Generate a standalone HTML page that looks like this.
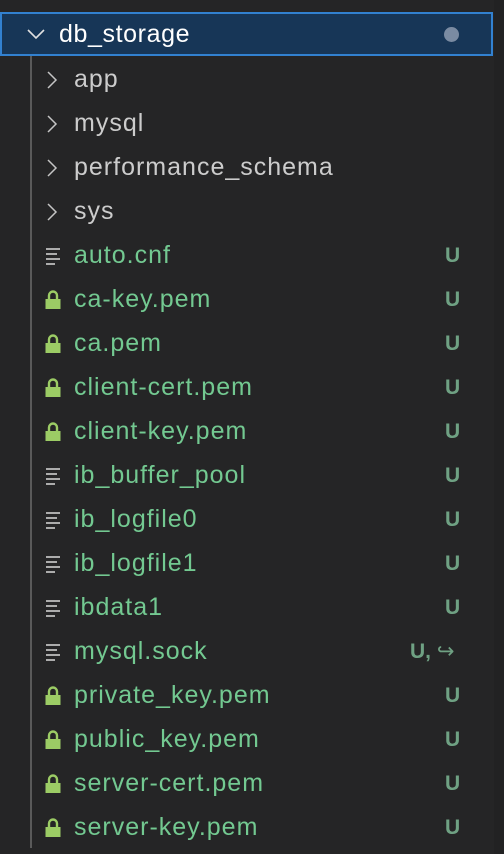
<!DOCTYPE html>
<html><head><meta charset="utf-8"><style>
html,body{margin:0;padding:0;width:504px;height:854px;background:#252526;overflow:hidden;font-family:"Liberation Sans",sans-serif;}
.strip{position:absolute;left:494px;top:0;width:10px;height:854px;background:#222223;}
.sel{position:absolute;left:0;top:12px;width:489px;height:40px;background:#173657;border:2px solid #3281d0;}
.dot{position:absolute;left:444px;top:27px;width:15px;height:15px;border-radius:50%;background:#7a8ba2;}
.guide{position:absolute;left:30px;top:56px;width:2px;height:792px;background:#5a5a5a;}
.row{position:absolute;left:0;height:44px;width:494px;}
.t{position:absolute;left:74px;top:8px;font-size:25px;letter-spacing:1px;line-height:28px;color:#73c991;white-space:nowrap;}
.f .t{color:#cccccc;}
.u{position:absolute;left:445px;top:10px;font-size:21px;font-weight:bold;line-height:26px;color:#6fa183;}
.ic{position:absolute;left:44px;top:12px;}
</style></head><body>
<div class="strip"></div>
<div class="sel"></div>
<svg style="position:absolute;left:26px;top:28px" width="20" height="12"><path d="M2 2 L10 10 L18 2" fill="none" stroke="#e0e0e0" stroke-width="1.6"/></svg>
<div style="position:absolute;left:59px;top:20px;font-size:25px;letter-spacing:0.6px;line-height:28px;color:#ffffff">db_storage</div>
<div class="dot"></div>
<div class="guide"></div>
<div id="rows"></div>
<div class="row f" style="top:57px"><svg class="ic" width="16" height="22"><path d="M4 3 L12 11 L4 19" fill="none" stroke="#c5c5c5" stroke-width="1.5"/></svg><div class="t">app</div></div>
<div class="row f" style="top:101px"><svg class="ic" width="16" height="22"><path d="M4 3 L12 11 L4 19" fill="none" stroke="#c5c5c5" stroke-width="1.5"/></svg><div class="t">mysql</div></div>
<div class="row f" style="top:145px"><svg class="ic" width="16" height="22"><path d="M4 3 L12 11 L4 19" fill="none" stroke="#c5c5c5" stroke-width="1.5"/></svg><div class="t">performance_schema</div></div>
<div class="row f" style="top:189px"><svg class="ic" width="16" height="22"><path d="M4 3 L12 11 L4 19" fill="none" stroke="#c5c5c5" stroke-width="1.5"/></svg><div class="t">sys</div></div>
<script>
var files=[["auto.cnf",0],["ca-key.pem",1],["ca.pem",1],["client-cert.pem",1],["client-key.pem",1],["ib_buffer_pool",0],["ib_logfile0",0],["ib_logfile1",0],["ibdata1",0],["mysql.sock",0],["private_key.pem",1],["public_key.pem",1],["server-cert.pem",1],["server-key.pem",1]];
var h="";
files.forEach(function(f,i){
var top=233+i*44;
var ic=f[1]?'<svg class="ic" width="18" height="22"><path d="M5 10 V6.5 a4 4 0 0 1 8 0 V10" fill="none" stroke="#9ccc65" stroke-width="2.4"/><rect x="1.5" y="10" width="15" height="10" fill="#9ccc65"/></svg>':'<svg class="ic" width="18" height="22"><g stroke="#c5c5c5" stroke-width="1.7"><line x1="2" y1="4" x2="16" y2="4"/><line x1="2" y1="9" x2="13" y2="9"/><line x1="2" y1="14" x2="16" y2="14"/><line x1="2" y1="19" x2="11" y2="19"/></g></svg>';
var u=f[0]=="mysql.sock"?'<div class="u" style="left:410px">U, <span style="font-weight:normal">↪</span></div>':'<div class="u">U</div>';
h+='<div class="row" style="top:'+top+'px">'+ic+'<div class="t">'+f[0]+'</div>'+u+'</div>';
});
document.getElementById("rows").innerHTML=h;
</script>
</body></html>
